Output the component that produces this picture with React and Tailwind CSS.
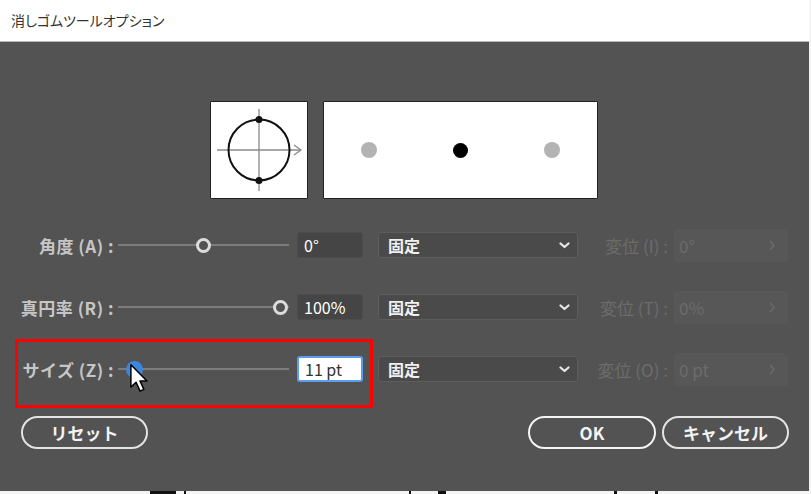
import React from "react";

const font = { fontFamily: '"Noto Sans CJK JP", "Noto Sans", sans-serif' };

const Chevron = () => (
	<svg width="11" height="7" viewBox="0 0 11 7" className="shrink-0">
		<path d="M1.5 1.5 L5.5 5 L9.5 1.5" fill="none" stroke="#e8e8e8" strokeWidth="2.2" strokeLinecap="round" strokeLinejoin="round" />
	</svg>
);

const RightChevron = () => (
	<svg width="7" height="11" viewBox="0 0 7 11">
		<path d="M1.5 1.5 L5 5.5 L1.5 9.5" fill="none" stroke="#6a6a6a" strokeWidth="1.6" strokeLinecap="round" />
	</svg>
);

// One option row: label, slider, value box, dropdown, disabled variance field
const OptionRow = ({ label, knobLeft, knobBlue, value, active, varLabel, varValue }) => (
	<div className="flex items-center h-[26px]">
		<div className="w-[114px] shrink-0 text-right text-[17px] font-bold text-[#c6c6c6] leading-none whitespace-nowrap tracking-[0.5px]">
			{label}
		</div>
		{/* slider */}
		<div className="relative ml-[4px] w-[171px] h-[26px] shrink-0 flex items-center">
			<div className="w-full h-[2px] bg-[#7c7c7c]" />
			{knobBlue ? (
				<div
					className="absolute top-[5px] w-[17px] h-[17px] rounded-full bg-[#3d86e0]"
					style={{ left: knobLeft - 8 }}
				/>
			) : (
				<div
					className="absolute top-[6px] w-[15px] h-[15px] rounded-full border-[3px] border-[#dcdcdc] bg-[#535353]"
					style={{ left: knobLeft - 7 }}
				/>
			)}
		</div>
		<div
			className={`ml-[8px] w-[66px] h-[26px] shrink-0 rounded-[3px] flex items-center px-[6px] text-[16px] leading-none ${
				active
					? "bg-white border-2 border-[#5b9ef0] text-[#333]"
					: "bg-[#454545] border border-[#4c4c4c] text-white"
			}`}
		>
			{value}
		</div>
		{/* dropdown */}
		<div className="ml-[15px] w-[200px] h-[26px] shrink-0 rounded-[3px] bg-[#4a4a4a] border border-[#5d5d5d] flex items-center justify-between pl-[9px] pr-[7px]">
			<span className="text-[16px] font-bold text-[#f0f0f0] leading-none">固定</span>
			<Chevron />
		</div>
		<div className="ml-[8px] w-[82px] shrink-0 text-right text-[17px] text-[#6c6c6c] leading-none whitespace-nowrap">
			{varLabel}
		</div>
		<div className="ml-[6px] w-[114px] h-[33px] shrink-0 rounded-[3px] bg-[#575757] flex items-center justify-between pl-[5px] pr-[12px] text-[17px] text-[#6c6c6c] leading-none">
			<span>{varValue}</span>
			<RightChevron />
		</div>
	</div>
);

const PillButton = ({ children, className }) => (
	<button
		className={`h-[33px] rounded-full border-2 border-[#e4e4e4] text-[17px] font-bold text-[#f2f2f2] flex items-center justify-center ${className}`}
	>
		{children}
	</button>
);

export default function App() {
	return (
		<div className="w-[811px] h-[494px] bg-[#f4f4f4] flex flex-col overflow-hidden" style={font}>
			{/* Title bar */}
			<div className="w-[809px] h-[42px] shrink-0 bg-white border-b border-[#b8b8b8] flex items-center pl-[11px]">
				<span className="text-[14px] text-[#333] [font-feature-settings:'palt']">
					消しゴムツールオプション
				</span>
			</div>

			{/* Dialog body */}
			<div className="w-[809px] h-[449px] shrink-0 bg-[#535353] flex flex-col pt-[59px]">
				{/* previews */}
				<div className="flex justify-center gap-[15px] pr-[1px]">
					<div className="w-[98px] h-[98px] bg-white border border-[#222] rounded-[1px]">
						<svg width="96" height="96" viewBox="0 0 96 96">
							<line x1="6" y1="48" x2="89" y2="48" stroke="#8a8a8a" strokeWidth="1.3" />
							<path d="M83 43 L90 48 L83 53" fill="none" stroke="#8a8a8a" strokeWidth="1.3" />
							<line x1="48" y1="7" x2="48" y2="89" stroke="#8a8a8a" strokeWidth="1.3" />
							<circle cx="48" cy="48" r="30.5" fill="none" stroke="#111" strokeWidth="2" />
							<circle cx="48" cy="17.5" r="3.5" fill="#111" />
							<circle cx="48" cy="78.5" r="3.5" fill="#111" />
						</svg>
					</div>
					<div className="w-[275px] h-[98px] bg-white border border-[#222] rounded-[1px] flex items-center">
						<div className="w-[16px] h-[16px] rounded-full bg-[#b3b3b3] ml-[37px]" />
						<div className="w-[15px] h-[15px] rounded-full bg-black ml-[76px]" />
						<div className="w-[16px] h-[16px] rounded-full bg-[#b3b3b3] ml-[76px]" />
					</div>
				</div>

				{/* option rows */}
				<div className="mt-[33px] flex flex-col gap-[36px]">
					<OptionRow label="角度 (A) :" knobLeft={85} value="0°" varLabel="変位 (I) :" varValue="0°" />
					<OptionRow label="真円率 (R) :" knobLeft={162} value="100%" varLabel="変位 (T) :" varValue="0%" />
					<div className="relative">
						<OptionRow label="サイズ (Z) :" knobLeft={16} knobBlue active value="11 pt" varLabel="変位 (O) :" varValue="0 pt" />
						{/* red highlight annotation */}
						<div className="absolute left-[15px] top-[-17px] w-[358px] h-[69px] border-[3px] border-[#ff0000] pointer-events-none" />
						{/* mouse cursor */}
						<svg className="absolute left-[129px] top-[7px]" width="21" height="31" viewBox="0 0 18 27">
							<path d="M1.5 1.5 L1.5 21 L6 16.8 L9.5 24.5 L12.8 23 L9.4 15.6 L15.5 15.6 Z" fill="white" stroke="black" strokeWidth="1.3" strokeLinejoin="round" />
						</svg>
					</div>
				</div>

				{/* buttons */}
				<div className="mt-[34px] flex items-center pl-[21px] pr-[20px]">
					<PillButton className="w-[127px] h-[31px]">リセット</PillButton>
					<div className="flex-1" />
					<PillButton className="w-[128px] border-[#f4f4f4]">OK</PillButton>
					<PillButton className="w-[127px] ml-[6px]">キャンセル</PillButton>
				</div>
			</div>

			{/* text fragments peeking below the dialog */}
			<div className="flex-1 flex items-start">
				<div className="ml-[150px] w-[26px] h-[3px] bg-[#111]" />
				<div className="ml-[8px] w-[2px] h-[3px] bg-[#111]" />
				<div className="ml-[223px] w-[2px] h-[3px] bg-[#111]" />
				<div className="ml-[27px] w-[8px] h-[3px] bg-[#111]" />
				<div className="ml-[168px] w-[3px] h-[3px] bg-[#111]" />
				<div className="ml-[38px] w-[3px] h-[3px] bg-[#111]" />
			</div>
		</div>
	);
}
